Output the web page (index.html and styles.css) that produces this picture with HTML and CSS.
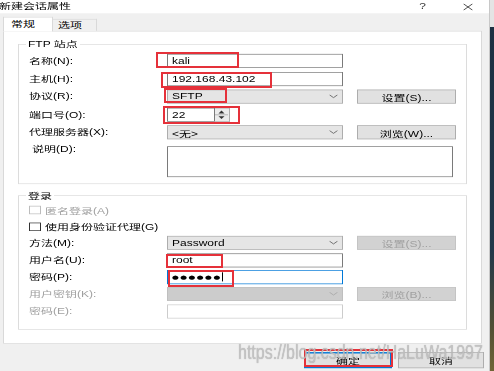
FILE: index.html
```html
<!DOCTYPE html>
<html lang="zh-CN">
<head>
  <meta charset="UTF-8" />
  <meta name="viewport" content="width=device-width, initial-scale=1.0" />
  <title>新建会话属性</title>
  <link rel="stylesheet" href="styles.css">
</head>
<body>
  <div class="window">
    <div class="titlebar">
      <span class="title">新建会话属性</span>
      <span class="caption-btn">?</span>
      <span class="caption-btn">
        <svg width="10" height="10" viewBox="0 0 10 10"><path d="M0.5 0.5 L9.5 9.5 M9.5 0.5 L0.5 9.5" /></svg>
      </span>
    </div>

    <div class="tabs">
      <div class="tab active">常规</div>
      <div class="tab">选项</div>
    </div>

    <div class="panel">
      <fieldset class="group ftp">
        <legend>FTP 站点</legend>
        <div class="form">
          <label>名称(N):</label>
          <div class="field">kali</div>

          <label>主机(H):</label>
          <div class="field">192.168.43.102</div>

          <label>协议(R):</label>
          <div class="select">SFTP <svg class="chev" width="9" height="6" viewBox="0 0 9 6"><polyline points="0.5,0.5 4.5,4.5 8.5,0.5" /></svg></div>
          <button class="btn">设置(S)...</button>

          <label>端口号(O):</label>
          <div class="port">
            <div class="field">22</div>
            <div class="spin">
              <svg width="13" height="18" viewBox="0 0 13 18"><path class="arrow" d="M6.5 3 L9.5 7 L3.5 7 Z" /><path class="sep" d="M0 9 H13" /><path class="arrow" d="M3.5 11 L9.5 11 L6.5 15 Z" /></svg>
            </div>
          </div>

          <label>代理服务器(X):</label>
          <div class="select">&lt;无&gt; <svg class="chev" width="9" height="6" viewBox="0 0 9 6"><polyline points="0.5,0.5 4.5,4.5 8.5,0.5" /></svg></div>
          <button class="btn">浏览(W)...</button>

          <label class="top">说明(D):</label>
          <div class="memo"></div>
        </div>
      </fieldset>

      <fieldset class="group login">
        <legend>登录</legend>
        <div class="form">
          <div class="check off"><span class="box"></span>匿名登录(A)</div>
          <div class="check"><span class="box"></span>使用身份验证代理(G)</div>

          <label>方法(M):</label>
          <div class="select">Password <svg class="chev" width="9" height="6" viewBox="0 0 9 6"><polyline points="0.5,0.5 4.5,4.5 8.5,0.5" /></svg></div>
          <button class="btn" disabled>设置(S)...</button>

          <label>用户名(U):</label>
          <div class="field">root</div>

          <label>密码(P):</label>
          <div class="field focus"><span class="dots">●●●●●●</span><span class="caret"></span></div>

          <label class="off">用户密钥(K):</label>
          <div class="select off"><svg class="chev" width="9" height="6" viewBox="0 0 9 6"><polyline points="0.5,0.5 4.5,4.5 8.5,0.5" /></svg></div>
          <button class="btn" disabled>浏览(B)...</button>

          <label class="off">密码(E):</label>
          <div class="field off"></div>
        </div>
      </fieldset>
    </div>

    <div class="footer">
      <button class="btn default">确定</button>
      <button class="btn cancel">取消</button>
    </div>
  </div>

  <div class="mark m-name"></div>
  <div class="mark m-host"></div>
  <div class="mark m-proto"></div>
  <div class="mark m-port"></div>
  <div class="mark m-user"></div>
  <div class="mark m-pass"></div>
  <div class="mark m-ok"></div>

  <div class="watermark">https://blog.csdn.net/HaLuWa1997</div>
</body>
</html>
```

FILE: styles.css
```css
* {
  box-sizing: border-box;
}

html,
body {
  margin: 0;
  height: 371px;
  overflow: hidden;
}

body {
  position: relative;
  width: 494px;
  font-family: "Liberation Sans", "Noto Sans CJK SC", sans-serif;
  font-size: 12px;
  color: #000;
  background: linear-gradient(#e4e4e4 0 27px, #1c3042 27px, #22384a 250px, #535034 330px, #6f6535 371px);
}

/* the dialog is drawn at full size, then squeezed like the screenshot */
.window {
  width: 490px;
  height: 530px;
  margin-bottom: -159px;
  background: #f0f0f0;
  border-right: 1px solid #c8c8c8;
  transform: scale(1, 0.7);
  transform-origin: 0 0;
}

.titlebar {
  height: 19px;
  background: #fff;
  display: flex;
  align-items: center;
}

.title {
  flex: 1;
  margin-left: -1px;
  line-height: 19px;
}

.caption-btn {
  width: 45px;
  text-align: center;
  color: #333;
  line-height: 19px;
}

.caption-btn:last-child {
  margin-right: -1px;
}

.caption-btn svg {
  display: block;
  margin: 0 auto;
}

.caption-btn path {
  stroke: #333;
  stroke-width: 1;
  fill: none;
}

.tabs {
  height: 25px;
  display: flex;
  align-items: flex-end;
  padding-left: 3px;
  position: relative;
  z-index: 1;
}

.tab {
  height: 17px;
  width: 44px;
  padding-left: 5px;
  line-height: 16px;
  border: 1px solid #d9d9d9;
  border-left: 0;
  border-bottom: 0;
  background: #f0f0f0;
}

.tab.active {
  height: 21px;
  width: 50px;
  padding-left: 7px;
  line-height: 20px;
  margin-bottom: -1px;
  border-left: 1px solid #d9d9d9;
  background: #fff;
}

.panel {
  width: 479px;
  height: 447px;
  margin-left: 3px;
  padding: 10px 14px 0;
  background: #fff;
  border: 1px solid #d9d9d9;
}

.group {
  margin: 0;
  min-width: 0;
  padding: 6px 10px 9px;
  border: 1px solid #dcdcdc;
}

.group legend {
  padding: 0 2px;
  margin-left: -3px;
  line-height: 16px;
}

.login {
  margin-top: 9px;
  padding: 3px 10px 15px;
}

.form {
  display: grid;
  grid-template-columns: 124px 176px 99px;
  column-gap: 14px;
  align-items: center;
}

.ftp .form {
  row-gap: 5.5px;
}

.login .form {
  row-gap: 4.3px;
}

.form label {
  grid-column: 1;
  line-height: 16px;
  white-space: nowrap;
}

.form label.top {
  align-self: start;
  margin-left: 3px;
}

.off {
  color: #a0a0a0;
}

.field {
  grid-column: 2;
  height: 20px;
  padding: 0 4px;
  line-height: 18px;
  white-space: nowrap;
  overflow: hidden;
  background: #fff;
  border: 1px solid #7a7a7a;
}

.field.focus {
  border-color: #0078d7;
  display: flex;
  align-items: center;
}

.field.off {
  border-color: #cccccc;
}

.dots {
  font-family: "DejaVu Sans", sans-serif;
  font-size: 8px;
  letter-spacing: 1.3px;
  line-height: 18px;
}

.caret {
  display: inline-block;
  width: 1px;
  height: 13px;
  background: #000;
}

.select {
  grid-column: 2;
  height: 20px;
  padding: 0 4px;
  display: flex;
  align-items: center;
  justify-content: space-between;
  background: #e5e5e5;
  border: 1px solid #adadad;
}

.select.off {
  justify-content: flex-end;
  background: #cccccc;
  border-color: #bfbfbf;
}

.chev polyline {
  fill: none;
  stroke: #606060;
  stroke-width: 1;
}

.select.off .chev polyline {
  stroke: #a8a8a8;
}

.btn {
  grid-column: 3;
  height: 20px;
  padding: 0;
  font: inherit;
  color: #000;
  background: #e1e1e1;
  border: 1px solid #adadad;
}

.btn:disabled {
  color: #a0a0a0;
  background: #d2d2d2;
  border-color: #c4c4c4;
}

.port {
  grid-column: 2;
  display: flex;
}

.port .field {
  width: 48px;
}

.spin {
  width: 15px;
  height: 20px;
  background: #ececec;
  border: 1px solid #adadad;
  border-left: 0;
}

.spin svg {
  display: block;
}

.spin .arrow {
  fill: #333;
}

.spin .sep {
  stroke: #adadad;
  stroke-width: 1;
}

.memo {
  grid-column: 2 / 4;
  width: 286px;
  height: 44.3px;
  margin-top: 4px;
  background: #fff;
  border: 1px solid #7a7a7a;
}

.check {
  grid-column: 1 / -1;
  height: 19px;
  display: flex;
  align-items: center;
  gap: 4px;
}

.check .box {
  width: 12px;
  height: 12px;
  background: #fff;
  border: 1px solid #333;
}

.check.off .box {
  border-color: #bcbcbc;
}

.footer {
  display: flex;
  justify-content: flex-end;
  gap: 6px;
  padding: 12px 5px 0 0;
}

.footer .btn {
  height: 23px;
  width: 86px;
}

.footer .default {
  width: 88px;
  border: 2px solid #0078d7;
}

/* red annotations drawn on top of the screenshot */
.mark {
  position: absolute;
  border: 2px solid #e5313a;
}

.m-name { left: 156px; top: 52px; width: 83px; height: 16px; }
.m-host { left: 161px; top: 72px; width: 111px; height: 16px; }
.m-proto { left: 164px; top: 88px; width: 63px; height: 15px; }
.m-port { left: 163px; top: 106px; width: 77px; height: 18px; }
.m-user { left: 166px; top: 254px; width: 57px; height: 14px; }
.m-pass { left: 168px; top: 270px; width: 66px; height: 17px; }
.m-ok { left: 304px; top: 349px; width: 89px; height: 18px; }

.watermark {
  position: absolute;
  left: 238px;
  top: 340px;
  font-family: "Liberation Sans", sans-serif;
  font-size: 20px;
  line-height: 24px;
  white-space: nowrap;
  color: rgba(200, 200, 200, 0.8);
  text-shadow: 0 0 1px rgba(110, 110, 110, 0.6);
  transform: scaleX(0.8);
  transform-origin: 0 0;
  pointer-events: none;
}
```
